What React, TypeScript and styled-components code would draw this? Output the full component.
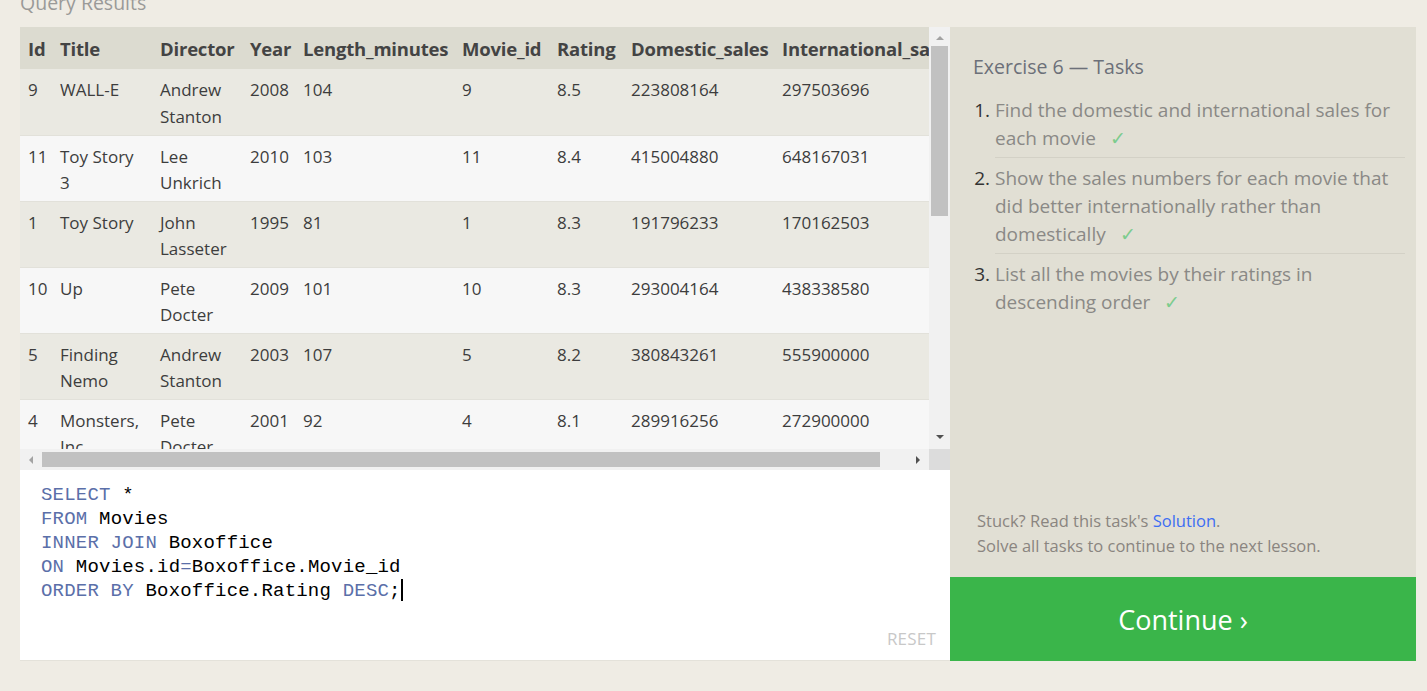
import React from "react";
import styled, { createGlobalStyle } from "styled-components";

const Global = createGlobalStyle`
  html, body { margin: 0; padding: 0; background: #efece4; }
  body { font-family: "Open Sans", "Noto Sans", sans-serif; overflow: hidden; }
  * { box-sizing: border-box; }
`;

const Page = styled.div`
  width: 1427px;
  height: 691px;
  padding: 0 11px 0 20px;
  display: flex;
  flex-direction: column;
`;

const Heading = styled.h2`
  margin: -9px 0 0 0;
  height: 36px;
  font-size: 19.5px;
  font-weight: 400;
  color: #9a9a98;
  line-height: 24px;
`;

const Panels = styled.div`
  display: flex;
  height: 634px;
`;

const LeftPanel = styled.div`
  width: 930px;
  flex-shrink: 0;
  display: flex;
  flex-direction: column;
  border-bottom: 1px solid #e4e2da;
`;

const Results = styled.div`
  height: 443px;
  display: grid;
  grid-template-columns: minmax(0, 1fr) 21px;
  grid-template-rows: minmax(0, 1fr) 21px;
  background: #f1f1f1;
`;

const Viewport = styled.div`
  overflow: hidden;
  min-width: 0;
  background: #f7f7f7;
`;

const Table = styled.table`
  border-collapse: collapse;
  table-layout: fixed;
  width: 1000px;
  font-size: 17px;
  color: #3d3d3d;
`;

const Th = styled.th`
  text-align: left;
  font-weight: 700;
  font-size: 18.5px;
  color: #444;
  background: #dcdbd0;
  height: 42px;
  padding: 0 2px 0 8px;
  white-space: nowrap;
  overflow: hidden;
  letter-spacing: -0.2px;
`;

const Tr = styled.tr<{ $odd: boolean }>`
  background: ${(p) => (p.$odd ? "#eae9e2" : "#f7f7f7")};
  border-bottom: 1px solid #e2e1da;
`;

const Td = styled.td`
  vertical-align: top;
  padding: 8px 8px 4px 8px;
  line-height: 26.5px;
  height: 66px;
`;

const VTrack = styled.div`
  background: #f1f1f1;
  display: flex;
  flex-direction: column;
  align-items: center;
`;

const VThumb = styled.div`
  width: 17px;
  height: 170px;
  background: #c1c1c1;
  margin-top: 6px;
  flex-shrink: 0;
`;

const HTrack = styled.div`
  background: #f1f1f1;
  display: flex;
  align-items: center;
  min-width: 0;
  overflow: hidden;
`;

const HThumb = styled.div`
  flex: 0 0 838px;
  height: 15px;
  background: #c1c1c1;
  margin-left: 9px;
`;

const Corner = styled.div`
  background: #dcdcdc;
`;

const Arrow = styled.div<{ $dir: "up" | "down" | "left" | "right" }>`
  width: 0;
  height: 0;
  flex-shrink: 0;
  ${(p) =>
    p.$dir === "up"
      ? "border-left:4px solid transparent;border-right:4px solid transparent;border-bottom:4px solid #a3a3a3;margin-top:9px;"
      : p.$dir === "down"
      ? "border-left:4px solid transparent;border-right:4px solid transparent;border-top:4px solid #505050;margin-top:auto;margin-bottom:10px;"
      : p.$dir === "left"
      ? "border-top:4px solid transparent;border-bottom:4px solid transparent;border-right:4px solid #a3a3a3;margin-left:9px;"
      : "border-top:4px solid transparent;border-bottom:4px solid transparent;border-left:4px solid #505050;margin-left:36px;"}
`;

const HRow = styled.div`
  display: contents;
`;

const Editor = styled.div`
  flex: 1;
  background: #fff;
  padding: 13px 14px 10px 21px;
  display: flex;
  flex-direction: column;
`;

const Code = styled.pre`
  margin: 0;
  font-family: "Liberation Mono", "DejaVu Sans Mono", monospace;
  font-size: 19px;
  letter-spacing: 0.2px;
  line-height: 24px;
  color: #000;
  flex: 1;
`;

const Kw = styled.span`
  color: #5b6fa9;
`;

const Cursor = styled.span`
  display: inline-block;
  width: 2px;
  height: 22px;
  background: #000;
  vertical-align: -5px;
`;

const Reset = styled.div`
  align-self: flex-end;
  font-size: 17px;
  color: #c8c8c8;
  letter-spacing: 0.2px;
`;

const RightPanel = styled.div`
  width: 466px;
  flex-shrink: 0;
  display: flex;
  flex-direction: column;
  background: #e1dfd4;
`;

const TaskArea = styled.div`
  flex: 1;
  padding: 26px 11px 0 23px;
  display: flex;
  flex-direction: column;
`;

const TaskTitle = styled.h3`
  margin: 0 0 15px 0;
  font-size: 19.5px;
  font-weight: 400;
  color: #6c7079;
  line-height: 28px;
`;

const TaskList = styled.ol`
  margin: 0;
  padding: 0 0 0 22px;
  color: #333;
  font-size: 19px;
  line-height: 28px;
`;

const Task = styled.li<{ $last?: boolean }>`
  padding: 0 0 ${(p) => (p.$last ? 0 : 5)}px 0;
  margin-bottom: ${(p) => (p.$last ? 0 : 6)}px;
  border-bottom: ${(p) => (p.$last ? "none" : "1px solid #d3d1c6")};
`;

const TaskText = styled.span`
  color: #8a8986;
`;

const Check = styled.span`
  color: #7ccc8d;
  margin-left: 14px;
`;

const Help = styled.div`
  margin-top: auto;
  padding: 0 0 19px 4px;
  font-size: 16.5px;
  line-height: 25px;
  color: #8a8580;
`;

const Link = styled.a`
  color: #3d6ef3;
  text-decoration: none;
`;

const Continue = styled.button`
  height: 84px;
  border: none;
  background: #3ab54a;
  color: #fff;
  font-family: "Open Sans", "Noto Sans", sans-serif;
  font-size: 27px;
  cursor: pointer;
  padding: 0;
`;

const rows = [
  ["9", "WALL-E", "Andrew Stanton", "2008", "104", "9", "8.5", "223808164", "297503696"],
  ["11", "Toy Story 3", "Lee Unkrich", "2010", "103", "11", "8.4", "415004880", "648167031"],
  ["1", "Toy Story", "John Lasseter", "1995", "81", "1", "8.3", "191796233", "170162503"],
  ["10", "Up", "Pete Docter", "2009", "101", "10", "8.3", "293004164", "438338580"],
  ["5", "Finding Nemo", "Andrew Stanton", "2003", "107", "5", "8.2", "380843261", "555900000"],
  ["4", "Monsters, Inc.", "Pete Docter", "2001", "92", "4", "8.1", "289916256", "272900000"],
  ["7", "Ratatouille", "Brad Bird", "2007", "115", "7", "8.0", "206445654", "417277164"],
];

const headers = ["Id", "Title", "Director", "Year", "Length_minutes", "Movie_id", "Rating", "Domestic_sales", "International_sales"];
const widths = [32, 100, 90, 53, 159, 95, 74, 151, 246];

export default function App() {
  return (
    <>
      <Global />
      <Page>
        <Heading>Query Results</Heading>
        <Panels>
          <LeftPanel>
            <Results>
              <Viewport>
                <Table>
                  <colgroup>
                    {widths.map((w, i) => (
                      <col key={i} style={{ width: w }} />
                    ))}
                  </colgroup>
                  <thead>
                    <tr>
                      {headers.map((h) => (
                        <Th key={h}>{h}</Th>
                      ))}
                    </tr>
                  </thead>
                  <tbody>
                    {rows.map((r, i) => (
                      <Tr key={i} $odd={i % 2 === 0}>
                        {r.map((c, j) => (
                          <Td key={j}>{c}</Td>
                        ))}
                      </Tr>
                    ))}
                  </tbody>
                </Table>
              </Viewport>
              <VTrack>
                <Arrow $dir="up" />
                <VThumb />
                <Arrow $dir="down" />
              </VTrack>
              <HRow>
                <HTrack>
                  <Arrow $dir="left" />
                  <HThumb />
                  <Arrow $dir="right" />
                </HTrack>
                <Corner />
              </HRow>
            </Results>
            <Editor>
              <Code>
                <Kw>SELECT</Kw> *{"\n"}
                <Kw>FROM</Kw> Movies{"\n"}
                <Kw>INNER JOIN</Kw> Boxoffice{"\n"}
                <Kw>ON</Kw> Movies.id<Kw>=</Kw>Boxoffice.Movie_id{"\n"}
                <Kw>ORDER BY</Kw> Boxoffice.Rating <Kw>DESC</Kw>;<Cursor />
              </Code>
              <Reset>RESET</Reset>
            </Editor>
          </LeftPanel>
          <RightPanel>
            <TaskArea>
              <TaskTitle>Exercise 6 — Tasks</TaskTitle>
              <TaskList>
                <Task>
                  <TaskText>
                    Find the domestic and international sales for each movie
                  </TaskText>
                  <Check>✓</Check>
                </Task>
                <Task>
                  <TaskText>
                    Show the sales numbers for each movie that did better internationally rather than domestically
                  </TaskText>
                  <Check>✓</Check>
                </Task>
                <Task $last>
                  <TaskText>List all the movies by their ratings in descending order</TaskText>
                  <Check>✓</Check>
                </Task>
              </TaskList>
              <Help>
                Stuck? Read this task's <Link href="#">Solution</Link>.
                <br />
                Solve all tasks to continue to the next lesson.
              </Help>
            </TaskArea>
            <Continue>Continue ›</Continue>
          </RightPanel>
        </Panels>
      </Page>
    </>
  );
}
